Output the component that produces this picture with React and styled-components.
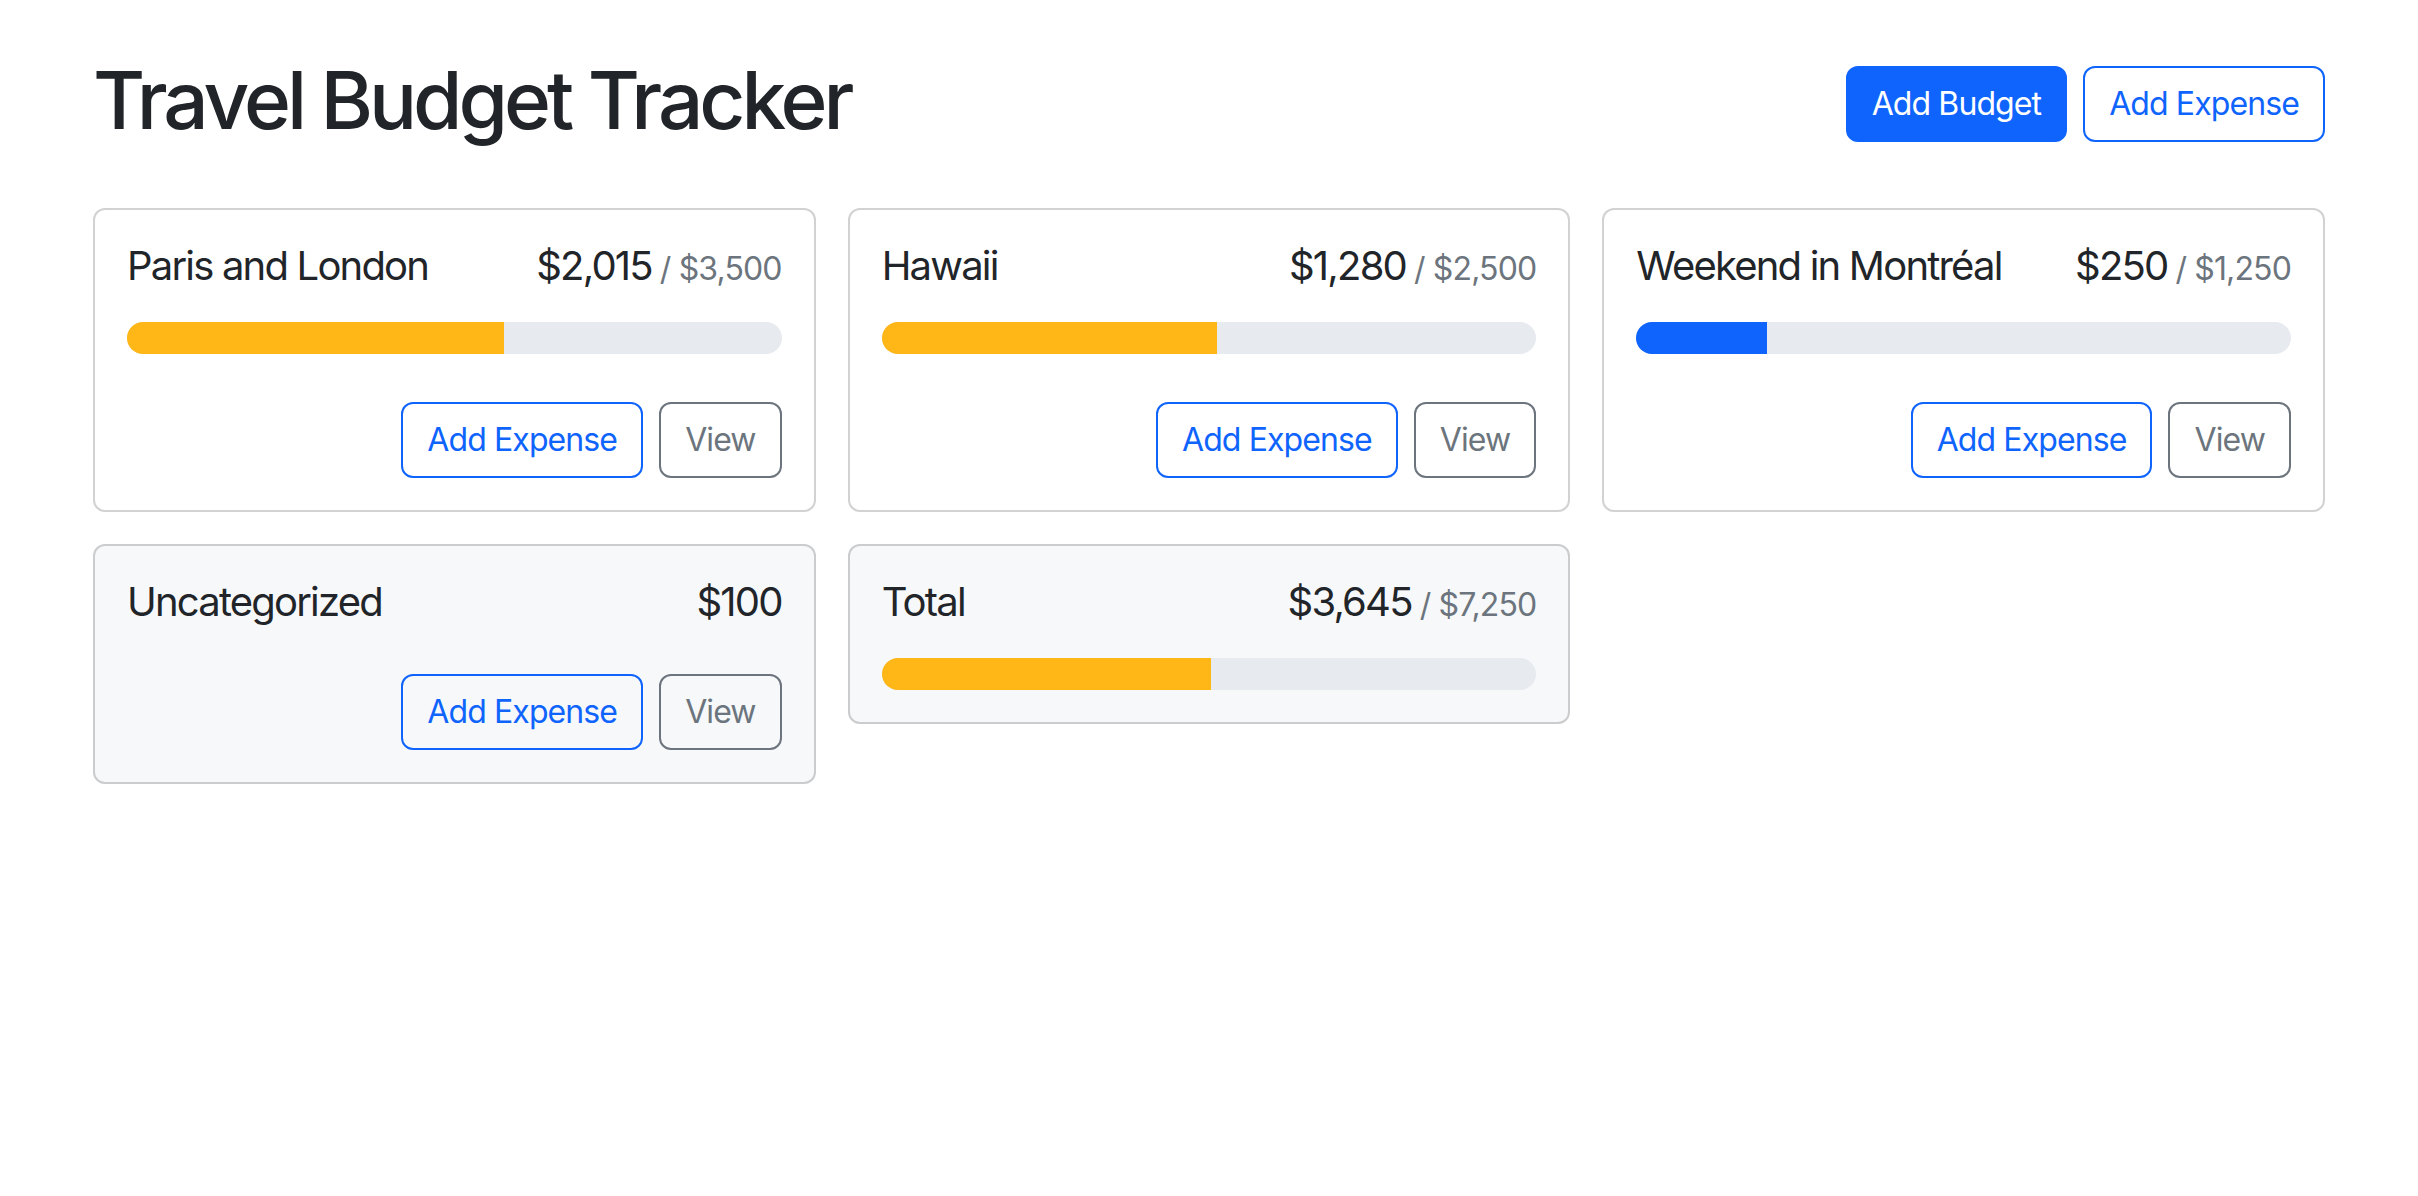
import React from 'react';
import styled, { createGlobalStyle, css } from 'styled-components';

const GlobalStyle = createGlobalStyle`
  *, *::before, *::after { box-sizing: border-box; }
  body {
    margin: 0;
    background: #fff;
    color: #212529;
    font-family: Inter, "Noto Sans", "Liberation Sans", sans-serif;
    font-size: 32px;
    line-height: 1.5;
  }
`;

const blue = '#0f64fe';
const yellow = '#feb716';

const Container = styled.div`
  max-width: 2280px;
  margin: 48px auto;
  padding: 0 24px;
`;

const Header = styled.div`
  display: flex;
  align-items: center;
  gap: 16px;
  margin-bottom: 48px;
`;

const Title = styled.h1`
  margin: 4px auto 12px 0;
  font-size: 80px;
  font-weight: 500;
  line-height: 1.2;
  letter-spacing: -0.05em;
`;

const variants = {
  primary: css`
    background: ${blue};
    border-color: ${blue};
    color: #fff;
  `,
  'outline-primary': css`
    background: transparent;
    border-color: ${blue};
    color: ${blue};
  `,
  'outline-secondary': css`
    background: transparent;
    border-color: #6c757d;
    color: #6c757d;
  `,
};

const Button = styled.button`
  font-family: inherit;
  font-size: 32px;
  line-height: 1.5;
  letter-spacing: -0.028em;
  padding: 12px 24px;
  border: 2px solid;
  border-radius: 12px;
  cursor: pointer;
  ${({ $variant }) => variants[$variant]}
`;

const Grid = styled.div`
  display: grid;
  grid-template-columns: repeat(auto-fill, minmax(600px, 1fr));
  gap: 32px;
  align-items: start;
`;

const Card = styled.div`
  border: 2px solid rgba(0, 0, 0, 0.175);
  border-radius: 12px;
  padding: 32px;
  background: ${({ $light }) => ($light ? '#f7f8fa' : '#fff')};
`;

const CardTitle = styled.div`
  display: flex;
  justify-content: space-between;
  align-items: baseline;
  margin-bottom: 32px;
  font-size: 40px;
  line-height: 1.2;
  font-weight: 400;
  letter-spacing: -0.045em;
`;

const Name = styled.div`
  margin-right: 16px;
`;

const Amount = styled.div`
  display: flex;
  align-items: baseline;
`;

const Max = styled.span`
  margin-left: 8px;
  font-size: 32px;
  letter-spacing: -0.027em;
  color: #6c757d;
`;

const Progress = styled.div`
  height: 32px;
  background: #e7eaee;
  border-radius: 100px;
  overflow: hidden;
  display: flex;
`;

const Fill = styled.div`
  background: ${({ $color }) => $color};
  height: 100%;
`;

const Actions = styled.div`
  display: flex;
  justify-content: flex-end;
  gap: 16px;
  margin-top: 48px;
`;

const fmt = (n) =>
  new Intl.NumberFormat('en-US', {
    style: 'currency',
    currency: 'USD',
    minimumFractionDigits: 0,
  }).format(n);

const barColor = (amount, max) => {
  const r = amount / max;
  if (r < 0.5) return blue;
  if (r < 0.75) return yellow;
  return '#dc3545';
};

const BudgetCard = ({ name, amount, max, light, hideButtons }) => (
  <Card $light={light}>
    <CardTitle>
      <Name>{name}</Name>
      <Amount>
        {fmt(amount)}
        {max && <Max>/ {fmt(max)}</Max>}
      </Amount>
    </CardTitle>
    {max && (
      <Progress>
        <Fill $color={barColor(amount, max)} style={{ width: `${(amount / max) * 100}%` }} />
      </Progress>
    )}
    {!hideButtons && (
      <Actions>
        <Button $variant="outline-primary">Add Expense</Button>
        <Button $variant="outline-secondary">View</Button>
      </Actions>
    )}
  </Card>
);

const budgets = [
  { name: 'Paris and London', amount: 2015, max: 3500 },
  { name: 'Hawaii', amount: 1280, max: 2500 },
  { name: 'Weekend in Montréal', amount: 250, max: 1250 },
];

export default function App() {
  return (
    <>
      <GlobalStyle />
      <Container>
        <Header>
          <Title>Travel Budget Tracker</Title>
          <Button $variant="primary">Add Budget</Button>
          <Button $variant="outline-primary">Add Expense</Button>
        </Header>
        <Grid>
          {budgets.map((b) => (
            <BudgetCard key={b.name} {...b} />
          ))}
          <BudgetCard name="Uncategorized" amount={100} light />
          <BudgetCard name="Total" amount={3645} max={7250} light hideButtons />
        </Grid>
      </Container>
    </>
  );
}
